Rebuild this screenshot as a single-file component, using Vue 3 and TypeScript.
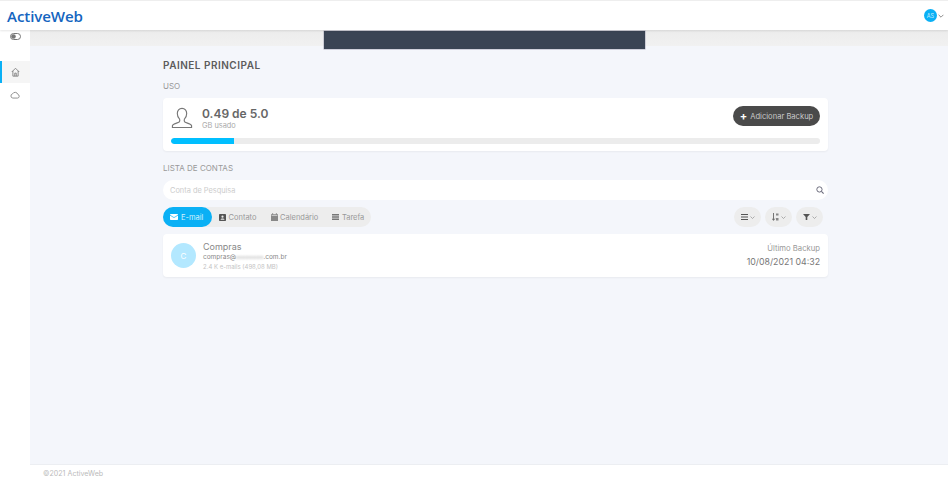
<script setup lang="ts">
const tabs = [
  { label: 'Contato', icon: 'contact' },
  { label: 'Calendário', icon: 'calendar' },
  { label: 'Tarefa', icon: 'task' },
]
</script>

<template>
  <div class="app">
    <header class="topbar">
      <span class="logo">ActiveWeb</span>
      <div class="user">
        <span class="avatar-small">AS</span>
        <svg viewBox="0 0 10 6" width="6" height="4"><path d="M1 1l4 4 4-4" fill="none" stroke="#777" stroke-width="1.4" /></svg>
      </div>
    </header>
    <div class="body">
      <aside class="sidebar">
        <div class="toggle-slot">
          <svg width="11" height="7" viewBox="0 0 11 7"><rect x=".5" y=".5" width="10" height="6" rx="3" fill="none" stroke="#777" /><circle cx="3.500" cy="3.500" r="2.300" fill="#777" /></svg>
        </div>
        <div class="nav active">
          <svg width="9" height="10" viewBox="0 0 12 13"><path d="M1 6.500l5-5 5 5M2.500 5v7h7V5M5 12V8h2v4" fill="none" stroke="#777" stroke-width="1.100" /></svg>
        </div>
        <div class="nav cloud">
          <svg width="10" height="8" viewBox="0 0 14 10"><path d="M4 9.300h6.500a2.600 2.600 0 0 0 .5-5.100A4 4 0 0 0 3.600 3.400 3 3 0 0 0 4 9.300z" fill="none" stroke="#777" stroke-width="1.100" /></svg>
        </div>
      </aside>
      <div class="main">
        <div class="band"><div class="dark-bar"></div></div>
        <main class="content">
          <h1>PAINEL PRINCIPAL</h1>
          <div class="label uso">USO</div>
          <section class="card usage">
            <div class="usage-top">
              <svg class="person" width="22" height="22" viewBox="0 0 23 22"><path d="M11.500 1C8.400 1 6.600 3.400 6.600 6.400c0 2.300 1 4.600 2.400 5.800.4 1.300.2 2.400-.5 3-1.500 1.100-6.600 1.900-7 3.700v2h20v-2c-.4-1.800-5.500-2.600-7-3.700-.7-.6-.9-1.700-.5-3 1.400-1.200 2.400-3.500 2.400-5.800C16.400 3.400 14.600 1 11.500 1z" fill="none" stroke="#777" stroke-width="1.200" /></svg>
              <div class="usage-text">
                <div class="big">0.49 de 5.0</div>
                <div class="sub">GB usado</div>
              </div>
              <button class="add-btn"><span class="plus">+</span>Adicionar Backup</button>
            </div>
            <div class="progress"><div class="progress-fill" style="width: 9.7%"></div></div>
          </section>
          <div class="label lista">LISTA DE CONTAS</div>
          <div class="search">
            <span>Conta de Pesquisa</span>
            <svg width="8" height="8" viewBox="0 0 10 10"><circle cx="4.300" cy="4.300" r="3.300" fill="none" stroke="#667" stroke-width="1.200" /><path d="M6.800 6.800L9.500 9.500" stroke="#667" stroke-width="1.300" /></svg>
          </div>
          <div class="toolbar">
            <div class="tabs">
              <div class="tab on">
                <svg width="8" height="6" viewBox="0 0 8 6"><rect width="8" height="6" rx=".8" fill="#fff" /><path d="M0 1.200l4 2.400 4-2.400" fill="none" stroke="#0ab0f5" stroke-width=".7" /></svg>
                E-mail
              </div>
              <div v-for="t in tabs" :key="t.label" class="tab">
                <svg v-if="t.icon === 'contact'" width="7" height="7" viewBox="0 0 7 7"><rect width="7" height="7" rx=".7" fill="#555" /><circle cx="3.500" cy="2.700" r="1.100" fill="#eee" /><path d="M1.500 5.800c.3-1.600 3.700-1.600 4 0z" fill="#eee" /></svg>
                <svg v-else-if="t.icon === 'calendar'" width="7" height="8" viewBox="0 0 7 8"><path d="M0 1.200h1.300V0h.8v1.200h2.800V0h.8v1.200H7V8H0z" fill="#888" /><path d="M.6 2.500h5.800" stroke="#eee" stroke-width=".6" /></svg>
                <svg v-else width="7" height="6" viewBox="0 0 7 6"><path d="M0 0h7v1.500H0zM0 2.200h7v1.500H0zM0 4.400h7V6H0z" fill="#777" /></svg>
                {{ t.label }}
              </div>
            </div>
            <div class="tools">
              <div class="tool">
                <svg width="7" height="6" viewBox="0 0 7 6"><path d="M0 .5h7M0 3h7M0 5.500h7" stroke="#555" stroke-width="1.100" /></svg>
                <svg viewBox="0 0 10 6" width="5" height="3"><path d="M1 1l4 4 4-4" fill="none" stroke="#888" stroke-width="1.300" /></svg>
              </div>
              <div class="tool">
                <svg width="7" height="8" viewBox="0 0 7 8"><path d="M1.500 0v7M.2 5.600l1.300 1.800 1.300-1.800" fill="none" stroke="#666" stroke-width=".9" /><path d="M4 .5h2.500v2H4zM4 5h2.500v2.500H4z" fill="#888" /></svg>
                <svg viewBox="0 0 10 6" width="5" height="3"><path d="M1 1l4 4 4-4" fill="none" stroke="#888" stroke-width="1.300" /></svg>
              </div>
              <div class="tool">
                <svg width="7" height="6" viewBox="0 0 7 6"><path d="M0 0h7L4.300 3v3H2.700V3z" fill="#555" /></svg>
                <svg viewBox="0 0 10 6" width="5" height="3"><path d="M1 1l4 4 4-4" fill="none" stroke="#888" stroke-width="1.300" /></svg>
              </div>
            </div>
          </div>
          <section class="card account">
            <div class="acc-avatar">C</div>
            <div class="acc-info">
              <div class="acc-name">Compras</div>
              <div class="acc-mail">compras@<span class="masked">xxxxxxxxxx</span>.com.br</div>
              <div class="acc-count">2.4 K e-mails (498,08 MB)</div>
            </div>
            <div class="acc-backup">
              <div class="bk-label">Último Backup</div>
              <div class="bk-date">10/08/2021 04:32</div>
            </div>
          </section>
        </main>
        <footer class="footer">©2021 ActiveWeb</footer>
      </div>
    </div>
  </div>
</template>

<style>
html, body { margin: 0; background: #fff; }
</style>

<style scoped>
.app { width: 948px; height: 480px; display: flex; flex-direction: column; overflow: hidden; font-family: "Inter", "Liberation Sans", sans-serif; color: #777; }
.topbar { height: 30px; box-sizing: border-box; border-top: 1px solid #eee; background: #fff; display: flex; align-items: center; justify-content: space-between; padding: 0 4px 0 7px; position: relative; z-index: 2; box-shadow: 0 1px 2px rgba(0,0,0,.1); }
.logo { font-family: "Open Sans", sans-serif; font-weight: 600; font-size: 15.100px; color: #1565c0; letter-spacing: -0.1px; }
.user { display: flex; align-items: center; gap: 1px; }
.avatar-small { width: 13px; height: 13px; border-radius: 50%; background: #0ab0f5; color: #cdeefc; font-size: 5.500px; display: flex; align-items: center; justify-content: center; }
.body { flex: 1; display: flex; min-height: 0; }
.sidebar { width: 30px; background: #fff; flex: none; }
.toggle-slot { height: 31px; box-sizing: border-box; padding-top: 3px; display: flex; justify-content: center; align-items: flex-start; }
.nav { height: 22px; display: flex; align-items: center; justify-content: center; box-sizing: border-box; }
.nav.active { background: #f5f5f5; border-left: 2px solid #0ab0f5; padding-right: 2px; }
.nav.cloud { padding-top: 1px; }
.main { flex: 1; display: flex; flex-direction: column; background: #f4f6fb; min-width: 0; }
.band { height: 16px; flex: none; background: linear-gradient(#ececec, #f1f1f1); position: relative; }
.dark-bar { position: absolute; left: 294px; top: 1px; width: 321px; height: 18px; background: #3a4454; box-shadow: 0 0 0 .5px #aab; }
.content { flex: 1; margin-left: 133px; width: 665px; min-height: 0; }
h1 { margin: 12.500px 0 0; font-size: 10px; line-height: 13px; font-weight: 600; color: #5c5c5c; letter-spacing: .5px; }
.label { font-size: 8px; line-height: 10px; color: #999; }
.uso { margin-top: 9.500px; }
.card { background: #fff; border-radius: 4px; box-shadow: 0 1px 2px rgba(0,0,0,.05); }
.usage { margin-top: 7px; height: 53px; box-sizing: border-box; padding: 8px 8px 0; }
.usage-top { display: flex; align-items: center; height: 24px; }
.person { flex: none; margin-right: 9px; }
.usage-text { flex: 1; }
.big { font-size: 12px; line-height: 15px; font-weight: 600; color: #666; }
.sub { font-size: 7.400px; line-height: 9px; color: #aaa; }
.add-btn { width: 87px; height: 20px; align-self: flex-start; border: 0; border-radius: 10px; background: #4a4a4a; color: #c8c8c8; font: 7.600px "Inter", sans-serif; display: flex; align-items: center; justify-content: center; gap: 3px; padding: 0; }
.plus { color: #fff; font-size: 11px; font-weight: 700; line-height: 10px; }
.progress { margin-top: 8px; height: 6px; border-radius: 3px; background: #ececec; overflow: hidden; }
.progress-fill { height: 100%; background: #00bfff; border-radius: 3px 0 0 3px; }
.lista { margin-top: 12px; }
.search { margin-top: 7px; height: 20px; background: #fff; border-radius: 10px; display: flex; align-items: center; justify-content: space-between; padding: 0 4px 0 7px; font-size: 7.400px; color: #ccc; }
.toolbar { margin-top: 7px; display: flex; justify-content: space-between; align-items: center; }
.tabs { display: flex; background: #ededed; border-radius: 10px; height: 20px; }
.tab { display: flex; align-items: center; gap: 2.500px; font-size: 7.500px; color: #999; padding: 0 7px; }
.tab.on { background: #0ab0f5; color: #d5f2fd; border-radius: 10px; width: 49px; box-sizing: border-box; padding: 0 7px; gap: 3px; }
.tools { display: flex; gap: 4px; padding-right: 5px; }
.tool { width: 27px; height: 20px; border-radius: 10px; background: #ededed; display: flex; align-items: center; justify-content: center; gap: 2px; }
.account { margin-top: 7px; height: 43px; display: flex; align-items: center; padding: 0 8px; box-sizing: border-box; }
.acc-avatar { width: 25px; height: 25px; border-radius: 50%; background: #b3e8ff; color: #fff; font-size: 8px; display: flex; align-items: center; justify-content: center; margin-right: 7px; flex: none; }
.acc-info { flex: 1; }
.acc-name { font-size: 9px; line-height: 11px; color: #888; }
.acc-mail { font-size: 6.500px; line-height: 9px; color: #888; margin-top: 1px; }
.masked { filter: blur(1.200px); color: #aaa; font-size: 5px; }
.acc-count { font-size: 6px; line-height: 8px; color: #c4c4c4; margin-top: 1px; }
.acc-backup { text-align: right; }
.bk-label { font-size: 7.700px; line-height: 10px; color: #999; }
.bk-date { font-size: 8.800px; line-height: 13px; color: #777; margin-top: 1px; }
.footer { height: 16px; flex: none; background: #fff; border-top: 1px solid #eceef2; font-size: 7.100px; color: #bbb; padding: 3px 0 0 13px; box-sizing: border-box; line-height: 11px; }
</style>
